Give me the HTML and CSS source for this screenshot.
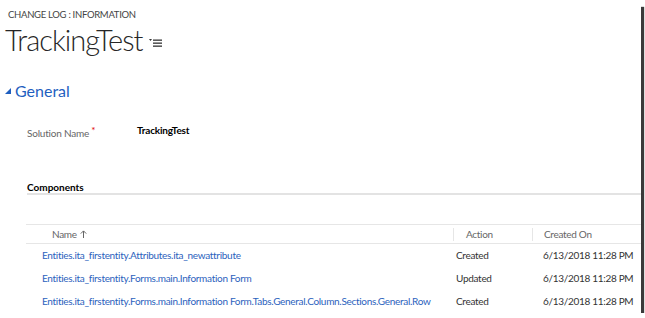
FILE: index.html
```html
<!DOCTYPE html>
<html lang="en">
<head>
  <meta charset="UTF-8" />
  <title>Change Log : Information</title>
  <link rel="stylesheet" href="styles.css">
</head>
<body>
  <div class="page">
    <!-- Header -->
    <div class="breadcrumb">CHANGE LOG : INFORMATION</div>
    <div class="title-row">
      <h1 class="title">TrackingTest</h1>
      <svg class="menu-icon" width="14" height="10" viewBox="0 0 14 10">
        <path d="M0 1 L3 1 L1.5 3 Z" fill="#333" />
        <rect x="4" y="1.5" width="9" height="1.3" fill="#333" />
        <rect x="4" y="4.5" width="9" height="1.3" fill="#333" />
        <rect x="4" y="7.5" width="9" height="1.3" fill="#333" />
      </svg>
    </div>

    <!-- General section -->
    <div class="section-head">
      <svg class="caret" width="6" height="6" viewBox="0 0 6 6">
        <path d="M6 0 L6 6 L0 6 Z" fill="#1f5fbf" />
      </svg>
      <h2 class="section-title">General</h2>
    </div>

    <div class="field">
      <span class="field-label">Solution Name<span class="req">*</span></span>
      <span class="field-value">TrackingTest</span>
    </div>

    <div class="subgrid-title">Components</div>

    <div class="grid">
      <div class="grid-head">
        <div class="cell name">Name
          <svg class="sort" width="7" height="8" viewBox="0 0 7 8">
            <path d="M3.5 8 L3.5 1 M0.8 3.6 L3.5 0.9 L6.2 3.6" stroke="#666" stroke-width="1" fill="none" />
          </svg>
        </div>
        <div class="cell action sep">Action</div>
        <div class="cell date sep">Created On</div>
        <div class="cell sep"></div>
      </div>
      <div class="grid-row">
        <a class="cell name" href="#">Entities.ita_firstentity.Attributes.ita_newattribute</a>
        <div class="cell action">Created</div>
        <div class="cell date">6/13/2018 11:28 PM</div>
      </div>
      <div class="grid-row">
        <a class="cell name" href="#">Entities.ita_firstentity.Forms.main.Information Form</a>
        <div class="cell action">Updated</div>
        <div class="cell date">6/13/2018 11:28 PM</div>
      </div>
      <div class="grid-row">
        <a class="cell name" href="#">Entities.ita_firstentity.Forms.main.Information Form.Tabs.General.Column.Sections.General.Row</a>
        <div class="cell action">Created</div>
        <div class="cell date">6/13/2018 11:28 PM</div>
      </div>
    </div>
  </div>
</body>
</html>
```

FILE: styles.css
```css
body {
  margin: 0;
  background-color: #ffffff;
  font-family: Lato, "Open Sans", sans-serif;
  color: #333333;
  overflow: hidden;
}

.page {
  width: 641px;
  height: 313px;
  background-color: #ffffff;
  box-shadow: 5px 5px 1px -2px #3a3a3a;
  overflow: hidden;
}

.breadcrumb {
  font-size: 9.5px;
  letter-spacing: -0.3px;
  line-height: 14px;
  color: #444444;
  padding: 8px 0 0 8px;
}

.title-row {
  display: flex;
  align-items: center;
  gap: 7px;
  padding-left: 5px;
}

.title {
  margin: 0;
  font-size: 29px;
  font-weight: 300;
  letter-spacing: -1px;
  line-height: 36px;
  color: #262626;
}

.menu-icon {
  margin-top: 5px;
}

.section-head {
  display: flex;
  align-items: center;
  gap: 4px;
  padding: 22px 0 0 5px;
}

.section-title {
  margin: 0;
  font-size: 16px;
  font-weight: 400;
  line-height: 22px;
  color: #1f5fbf;
}

.field {
  display: flex;
  padding: 20px 0 0 27px;
  font-size: 10px;
  letter-spacing: -0.2px;
  line-height: 16px;
}

.field-label {
  width: 110px;
  color: #666666;
}

.req {
  color: #e00000;
  font-size: 10px;
  vertical-align: 3px;
  margin-left: 2px;
}

.field-value {
  font-weight: 700;
  color: #000000;
}

.subgrid-title {
  margin: 40px 0 0 27px;
  font-size: 10px;
  font-weight: 700;
  line-height: 12px;
  color: #000000;
  border-bottom: 2px solid #e3e3e3;
}

.grid {
  margin: 29px 0 0 26px;
  font-size: 10px;
  letter-spacing: -0.3px;
}

.grid-head,
.grid-row {
  display: grid;
  grid-template-columns: 427px 79px 98px 1fr;
  align-items: center;
}

.grid-head {
  height: 18px;
  border-top: 1px solid #e6e6e6;
  border-bottom: 1px solid #e6e6e6;
  color: #666666;
}

.grid-row {
  height: 23px;
}

.cell {
  white-space: nowrap;
  line-height: 13px;
}

.grid-head .name {
  display: flex;
  align-items: center;
  gap: 3px;
  padding-left: 26px;
}

.grid-row .name {
  padding-left: 16px;
  color: #2b62bd;
  text-decoration: none;
}

.grid-head .action {
  padding-left: 12px;
}

.grid-row .action {
  padding-left: 3px;
}

.date {
  padding-left: 11px;
}

.sep {
  border-left: 1px solid #e6e6e6;
}
```
